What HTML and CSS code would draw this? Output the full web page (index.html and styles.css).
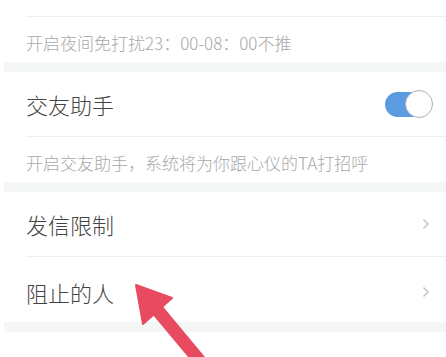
FILE: index.html
```html
<!DOCTYPE html>
<html lang="zh">
<head>
<meta charset="utf-8">
<link rel="stylesheet" href="styles.css">
</head>
<body>
<div class="page">
  <div class="top"></div>
  <div class="divider"></div>
  <div class="hint">开启夜间免打扰23：00-08：00不推</div>
  <div class="band"></div>

  <div class="row">
    <span class="title">交友助手</span>
    <span class="toggle"><span class="knob"></span></span>
  </div>
  <div class="divider"></div>
  <div class="hint">开启交友助手，系统将为你跟心仪的TA打招呼</div>
  <div class="band"></div>

  <div class="row">
    <span class="title">发信限制</span>
    <svg class="chev" width="8" height="12" viewBox="0 0 8 12"><polyline points="1.5,1.5 6,6 1.5,10.5" fill="none" stroke="#c4c4c4" stroke-width="1.5"/></svg>
  </div>
  <div class="divider"></div>
  <div class="row row-last">
    <span class="title">阻止的人</span>
    <svg class="chev" width="8" height="12" viewBox="0 0 8 12"><polyline points="1.5,1.5 6,6 1.5,10.5" fill="none" stroke="#c4c4c4" stroke-width="1.5"/></svg>
  </div>
  <div class="band"></div>

  <svg class="arrow" width="446" height="357" viewBox="0 0 446 357">
    <line x1="154" y1="306" x2="204" y2="366" stroke="#e84a60" stroke-width="13"/>
    <polygon points="136,285 172,298 143,324" fill="#e84a60" stroke="#e84a60" stroke-width="2" stroke-linejoin="round"/>
  </svg>
</div>
</body>
</html>
```

FILE: styles.css
```css
html, body {
  margin: 0;
  padding: 0;
  background: #ffffff;
}
.page {
  position: relative;
  width: 446px;
  height: 357px;
  overflow: hidden;
  font-family: "Noto Sans CJK SC", "Noto Sans", sans-serif;
}
.top {
  height: 16px;
}
.divider {
  height: 1px;
  margin-left: 26px;
  background: #efefef;
}
.hint {
  height: 45px;
  box-sizing: border-box;
  padding: 6px 0 0 26px;
  display: flex;
  align-items: center;
  font-size: 17px;
  font-weight: 300;
  color: #a9a9a9;
  white-space: nowrap;
}
.band {
  height: 10px;
  margin-left: 4px;
  background: #f5f7f7;
}
.row {
  height: 64px;
  display: flex;
  align-items: center;
  justify-content: space-between;
  padding: 0 14px 0 26px;
}
.row-last {
  height: 65px;
  box-sizing: border-box;
  padding-top: 4px;
}
.title {
  font-size: 22px;
  font-weight: 300;
  color: #444444;
}
.chev {
  margin-right: 2px;
}
.toggle {
  width: 47px;
  height: 25px;
  border-radius: 13px;
  background: #5b9be2;
  display: flex;
  justify-content: flex-end;
  align-items: center;
}
.knob {
  width: 26px;
  height: 26px;
  flex: none;
  border-radius: 50%;
  background: #ffffff;
  border: 1px solid #a9b3bd;
  margin-right: -1px;
}
.arrow {
  position: absolute;
  left: 0;
  top: 0;
  pointer-events: none;
}
```
